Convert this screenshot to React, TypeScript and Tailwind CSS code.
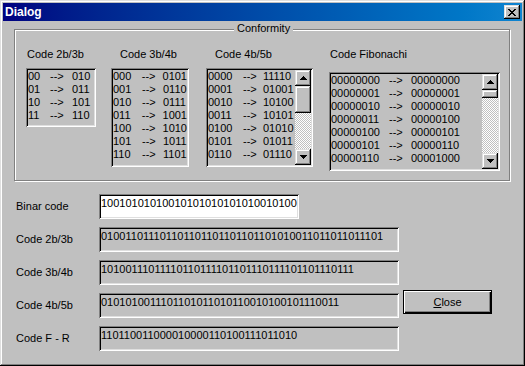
import React from 'react';

type Pair = [string, string];

const raised = "shadow-[inset_-1px_-1px_#000,inset_1px_1px_#dfdfdf,inset_-2px_-2px_#808080,inset_2px_2px_#fff]";
const sunken = "shadow-[inset_1px_1px_#808080,inset_-1px_-1px_#fff,inset_2px_2px_#000,inset_-2px_-2px_#dfdfdf]";

const code2b3b: Pair[] = [['00', '010'], ['01', '011'], ['10', '101'], ['11', '110']];
const code3b4b: Pair[] = [
    ['000', '0101'], ['001', '0110'], ['010', '0111'], ['011', '1001'],
    ['100', '1010'], ['101', '1011'], ['110', '1101'],
];
const code4b5b: Pair[] = [
    ['0000', '11110'], ['0001', '01001'], ['0010', '10100'], ['0011', '10101'],
    ['0100', '01010'], ['0101', '01011'], ['0110', '01110'],
];
const codeFib: Pair[] = [
    ['00000000', '00000000'], ['00000001', '00000001'], ['00000010', '00000010'], ['00000011', '00000100'],
    ['00000100', '00000101'], ['00000101', '00000110'], ['00000110', '00001000'],
];

// encoded from the right, group by group
const results = [
    { label: 'Code 2b/3b', value: '010011011101101101101101101101010011011011011101' },
    { label: 'Code 3b/4b', value: '10100111011110110111101101110111101101110111' },
];

const Arrow: React.FC<{ down?: boolean }> = ({ down }) => (
    <svg width="7" height="4" viewBox="0 0 7 4" className={down ? 'rotate-180' : ''} shapeRendering="crispEdges">
        <path d="M3 0h1v1h-1z M2 1h3v1h-3z M1 2h5v1h-5z M0 3h7v1h-7z" fill="#000" />
    </svg>
);

const ScrollBar: React.FC<{ thumb: string }> = ({ thumb }) => (
    <div className="flex w-[16px] flex-col">
        <div className={`flex h-[16px] items-center justify-center bg-[#c0c0c0] ${raised}`}><Arrow /></div>
        <div className={`${thumb} bg-[#c0c0c0] ${raised}`} />
        <div className="flex-1 bg-[image:repeating-conic-gradient(#fff_0_25%,#c0c0c0_0_50%)] bg-[length:2px_2px]" />
        <div className={`flex h-[16px] items-center justify-center bg-[#c0c0c0] ${raised}`}><Arrow down /></div>
    </div>
);

interface ListProps {
    rows: Pair[];
    box: string;
    keyW: string;
    arrowW: string;
    thumb?: string;
}

const ListBox: React.FC<ListProps> = ({ rows, box, keyW, arrowW, thumb }) => (
    <div className={`flex bg-[#c0c0c0] p-[2px] ${box} ${sunken}`}>
        <div className="flex-1 overflow-hidden">
            {rows.map(([a, b]) => (
                <div key={a} className="flex h-[13px] leading-[13px] whitespace-nowrap">
                    <span className={keyW}>{a}</span>
                    <span className={arrowW}>--&gt;</span>
                    <span>{b}</span>
                </div>
            ))}
        </div>
        {thumb && <ScrollBar thumb={thumb} />}
    </div>
);

const Field: React.FC<{ value: string; white?: boolean; width?: string }> = ({ value, white, width = 'w-[300px]' }) => (
    <div className={`h-[25px] ${width} px-[2px] pt-[3px] leading-[13px] whitespace-nowrap overflow-hidden ${white ? 'bg-white' : 'bg-[#c0c0c0]'} ${sunken}`}>
        {value}
    </div>
);

const Label: React.FC<{ children: React.ReactNode }> = ({ children }) => (
    <span className="w-[83px] leading-[13px]">{children}</span>
);

const App: React.FC = () => {
    return (
        <div className="h-[366px] w-[525px] bg-[#c0c0c0] p-[3px] text-[11px] text-black font-['Liberation_Sans',Arial,sans-serif] shadow-[inset_-1px_-1px_#000,inset_1px_1px_#dfdfdf,inset_-2px_-2px_#808080,inset_2px_2px_#fff]">
            {/* title bar */}
            <div className="flex h-[18px] items-center bg-linear-to-r from-[#000080] to-[#1084d0] pl-[2px] pr-[2px]">
                <span className="flex-1 text-[12px] font-bold text-white">Dialog</span>
                <div className={`flex h-[14px] w-[16px] items-center justify-center bg-[#c0c0c0] ${raised}`}>
                    <svg width="8" height="7" viewBox="0 0 8 7" shapeRendering="crispEdges">
                        <path d="M0 0h2v1h-2z M6 0h2v1h-2z M1 1h2v1h-2z M5 1h2v1h-2z M2 2h4v1h-4z M3 3h2v1h-2z M2 4h4v1h-4z M1 5h2v1h-2z M5 5h2v1h-2z M0 6h2v1h-2z M6 6h2v1h-2z" fill="#000" />
                    </svg>
                </div>
            </div>

            {/* conformity group */}
            <div className="relative ml-[11px] mt-[8px] flex h-[152px] w-[496px] border border-[#808080] pl-[11px] pt-[18px] shadow-[1px_1px_#fff,inset_1px_1px_#fff]">
                <span className="absolute -top-[8px] left-[219px] bg-[#c0c0c0] px-[3px] leading-[13px]">Conformity</span>

                <div className="flex w-[70px] flex-col">
                    <span className="ml-[1px] leading-[13px]">Code 2b/3b</span>
                    <div className="mt-[7px]">
                        <ListBox rows={code2b3b} box="w-[70px] h-[59px]" keyW="w-[22px]" arrowW="w-[22px]" />
                    </div>
                </div>

                <div className="ml-[15px] flex w-[78px] flex-col">
                    <span className="ml-[9px] leading-[13px]">Code 3b/4b</span>
                    <div className="mt-[7px]">
                        <ListBox rows={code3b4b} box="w-[78px] h-[99px]" keyW="w-[29px]" arrowW="w-[21px]" />
                    </div>
                </div>

                <div className="ml-[17px] flex w-[107px] flex-col">
                    <span className="ml-[9px] leading-[13px]">Code 4b/5b</span>
                    <div className="mt-[7px]">
                        <ListBox rows={code4b5b} box="w-[107px] h-[99px]" keyW="w-[35px]" arrowW="w-[20px]" thumb="h-[27px]" />
                    </div>
                </div>

                <div className="ml-[16px] flex w-[171px] flex-col">
                    <span className="ml-[1px] leading-[13px]">Code Fibonachi</span>
                    <div className="mt-[11px]">
                        <ListBox rows={codeFib} box="w-[171px] h-[99px]" keyW="w-[58px]" arrowW="w-[22px]" thumb="h-[8px]" />
                    </div>
                </div>
            </div>

            {/* results */}
            <div className="mt-[13px] flex flex-col gap-[8px] pl-[13px]">
                <div className="flex items-center">
                    <Label>Binar code</Label>
                    <Field value="10010101010010101010101010010100" white width="w-[200px]" />
                </div>
                {results.map((r) => (
                    <div key={r.label} className="flex items-center">
                        <Label>{r.label}</Label>
                        <Field value={r.value} />
                    </div>
                ))}
                <div className="flex items-center">
                    <Label>Code 4b/5b</Label>
                    <Field value="0101010011101101011010110010100101110011" />
                    <button
                        type="button"
                        className="-mt-[3px] ml-[4px] h-[24px] w-[89px] self-start border border-black bg-[#c0c0c0] leading-[13px] shadow-[inset_1px_1px_#fff,inset_-1px_-1px_#000,inset_-2px_-2px_#808080]"
                    >
                        <span className="underline">C</span>lose
                    </button>
                </div>
                <div className="flex items-center">
                    <Label>Code F - R</Label>
                    <Field value="110110011000010000110100111011010" />
                </div>
            </div>
        </div>
    );
};

export default App;
